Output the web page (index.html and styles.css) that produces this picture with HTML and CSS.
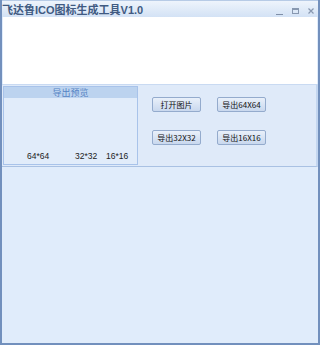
FILE: index.html
```html
<!DOCTYPE html>
<html>
<head>
<meta charset="utf-8">
<link rel="stylesheet" href="styles.css">
</head>
<body>
<div class="window">
  <div class="titlebar">
    <span class="title">飞达鲁ICO图标生成工具V1.0</span>
    <div class="controls">
      <span class="ctl min"></span>
      <span class="ctl max"></span>
      <span class="ctl close">
        <svg width="6" height="6" viewBox="0 0 6 6"><path d="M0.5 0.5L5.5 5.5M5.5 0.5L0.5 5.5" stroke="#8898b0" stroke-width="1.2"/></svg>
      </span>
    </div>
  </div>
  <div class="client"></div>
  <div class="panel">
    <div class="group">
      <div class="group-head">导出预览</div>
      <div class="group-body">
        <span class="size s64">64*64</span>
        <span class="size s32">32*32</span>
        <span class="size s16">16*16</span>
      </div>
    </div>
    <div class="buttons">
      <button class="btn">打开图片</button>
      <button class="btn">导出64X64</button>
      <button class="btn">导出32X32</button>
      <button class="btn">导出16X16</button>
    </div>
  </div>
  <div class="rest"></div>
</div>
</body>
</html>
```
FILE: styles.css
```css
html, body {
  margin: 0;
  padding: 0;
  background: #e0ecfb;
}
.window {
  width: 320px;
  height: 345px;
  box-sizing: border-box;
  border-left: 2px solid #7290bd;
  border-right: 2px solid #7290bd;
  border-bottom: 2px solid #7290bd;
  display: flex;
  flex-direction: column;
  background: #e0ecfb;
  font-family: "Noto Sans CJK SC", "Liberation Sans", sans-serif;
}
.titlebar {
  height: 17px;
  flex: none;
  display: flex;
  align-items: center;
  justify-content: space-between;
  background: linear-gradient(#eef4fc, #d3e2f5);
  border-top: 1px solid #b7cbe6;
  box-sizing: border-box;
  padding-left: 0;
}
.title {
  font-family: "Liberation Sans", "Noto Sans CJK SC", sans-serif;
  font-weight: bold;
  font-size: 11px;
  color: #405a82;
  line-height: 12px;
  margin-top: 2px;
  white-space: nowrap;
}
.controls {
  display: flex;
  align-items: center;
  gap: 9px;
  padding-right: 4px;
  margin-top: 3px;
}
.ctl {
  display: block;
  width: 7px;
  height: 6px;
}
.min {
  height: 6px;
  border-bottom: 1px solid #7f8fa8;
  box-sizing: border-box;
  margin-top: 3px;
}
.max {
  border: 1px solid #8898b0;
  border-top-width: 2px;
  box-sizing: border-box;
}
.close {
  width: 6px;
}
.close svg {
  display: block;
}
.client {
  height: 67px;
  flex: none;
  background: #ffffff;
  margin: 0 1px;
}
.panel {
  height: 83px;
  flex: none;
  display: flex;
  box-sizing: border-box;
  border-right: 2px solid #c3d6f0;
  border-bottom: 1px solid #a9c1e3;
  border-top: 1px solid #c9daf2;
  background: #dfeaf9;
  padding: 1px 0 1px 1px;
  margin-left: 0;
}
.group {
  width: 135px;
  flex: none;
  box-sizing: border-box;
  border: 1px solid #a8c3ea;
  display: flex;
  flex-direction: column;
  background: #e1ecfa;
}
.group-head {
  height: 11px;
  background: #bcd3ef;
  color: #5583c4;
  font-size: 9px;
  line-height: 11px;
  text-align: center;
}
.group-body {
  flex: 1;
  position: relative;
}
.size {
  position: absolute;
  top: 53px;
  font-family: "Liberation Sans", sans-serif;
  font-size: 8.5px;
  color: #222;
}
.s64 { left: 23px; }
.s32 { left: 71px; }
.s16 { left: 102px; }
.buttons {
  display: grid;
  grid-template-columns: 49px 49px;
  grid-auto-rows: 15px;
  column-gap: 16px;
  row-gap: 18px;
  padding: 11px 0 0 14px;
  align-content: start;
}
.btn {
  margin: 0;
  padding: 0;
  height: 15px;
  box-sizing: border-box;
  border: 1px solid #94abcd;
  border-radius: 2px;
  background: linear-gradient(#e9f0fa, #c9d8ee);
  font-family: "Noto Sans CJK SC", "Liberation Sans", sans-serif;
  font-size: 8px;
  line-height: 12px;
  color: #111;
  white-space: nowrap;
}
.rest {
  flex: 1;
}
```
